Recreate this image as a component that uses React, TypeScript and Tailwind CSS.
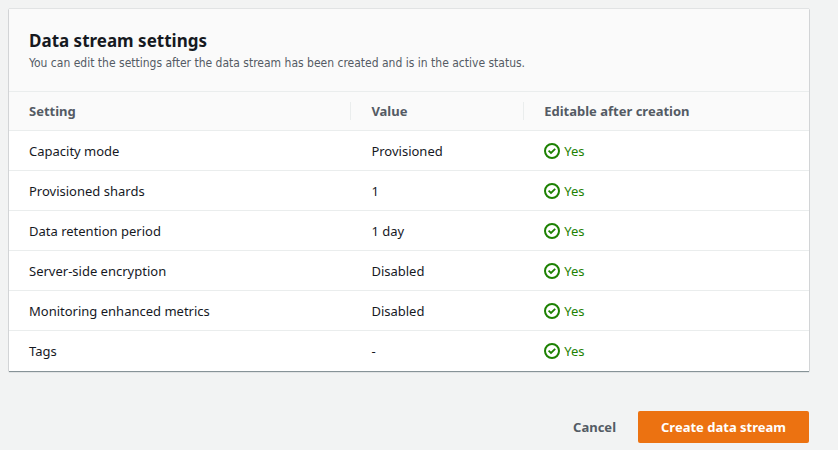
const rows = [
  ["Capacity mode", "Provisioned"],
  ["Provisioned shards", "1"],
  ["Data retention period", "1 day"],
  ["Server-side encryption", "Disabled"],
  ["Monitoring enhanced metrics", "Disabled"],
  ["Tags", "-"],
];

function CheckIcon() {
  return (
    <svg className="size-4 shrink-0" viewBox="0 0 16 16" fill="none" stroke="#1d8102" strokeWidth="2" aria-hidden="true">
      <circle cx="8" cy="8" r="7" />
      <path d="M4.6 7.6L7 10l4.2-4.2" strokeWidth="1.8" />
    </svg>
  );
}

export default function App() {
  return (
    <main className="min-h-screen bg-[#f2f3f3] pt-[9px] pr-[29px] pl-[9px] font-['Noto_Sans',sans-serif] text-[#16191f]">
      <section className="bg-white shadow-[0_1px_1px_0_rgba(0,28,36,0.4),0_0_1px_0_rgba(0,28,36,0.4)]">
        <header className="border-b border-[#eaeded] bg-[#fafafa] px-5 pt-5 pb-[18px]">
          <h1 className="text-[17px] leading-6 font-bold">Data stream settings</h1>
          <p className="font-['DejaVu_Sans_Condensed','DejaVu_Sans',sans-serif] text-xs leading-5 text-[#545b64]">
            You can edit the settings after the data stream has been created and is in the active status.
          </p>
        </header>
        <table className="w-full table-fixed border-collapse text-left text-[13px] leading-[18px]">
          <colgroup>
            <col className="w-[42.8%]" />
            <col className="w-[21.6%]" />
            <col />
          </colgroup>
          <thead className="bg-[#fafafa] text-[#545b64]">
            <tr className="border-b border-[#eaeded]">
              <th scope="col" className="py-[10px] pl-5 font-bold"><div className="border-r border-[#eaeded]">Setting</div></th>
              <th scope="col" className="py-[10px] pl-5 font-bold"><div className="border-r border-[#eaeded]">Value</div></th>
              <th scope="col" className="py-[10px] pl-5 font-bold">Editable after creation</th>
            </tr>
          </thead>
          <tbody>
            {rows.map(([setting, value]) => (
              <tr key={setting} className="h-10 border-b border-[#eaeded] last:border-b-0">
                <td className="pl-5">{setting}</td>
                <td className="pl-5">{value}</td>
                <td className="pl-5">
                  <span className="flex items-center gap-1 text-[#1d8102]">
                    <CheckIcon />
                    Yes
                  </span>
                </td>
              </tr>
            ))}
          </tbody>
        </table>
      </section>
      <footer className="mt-10 flex justify-end text-[13px] leading-5 font-bold">
        <button type="button" className="px-[22px] py-[6px] text-[#545b64]">Cancel</button>
        <button type="button" className="rounded-xs bg-[#ec7211] px-[23px] py-[6px] text-white">Create data stream</button>
      </footer>
    </main>
  );
}
